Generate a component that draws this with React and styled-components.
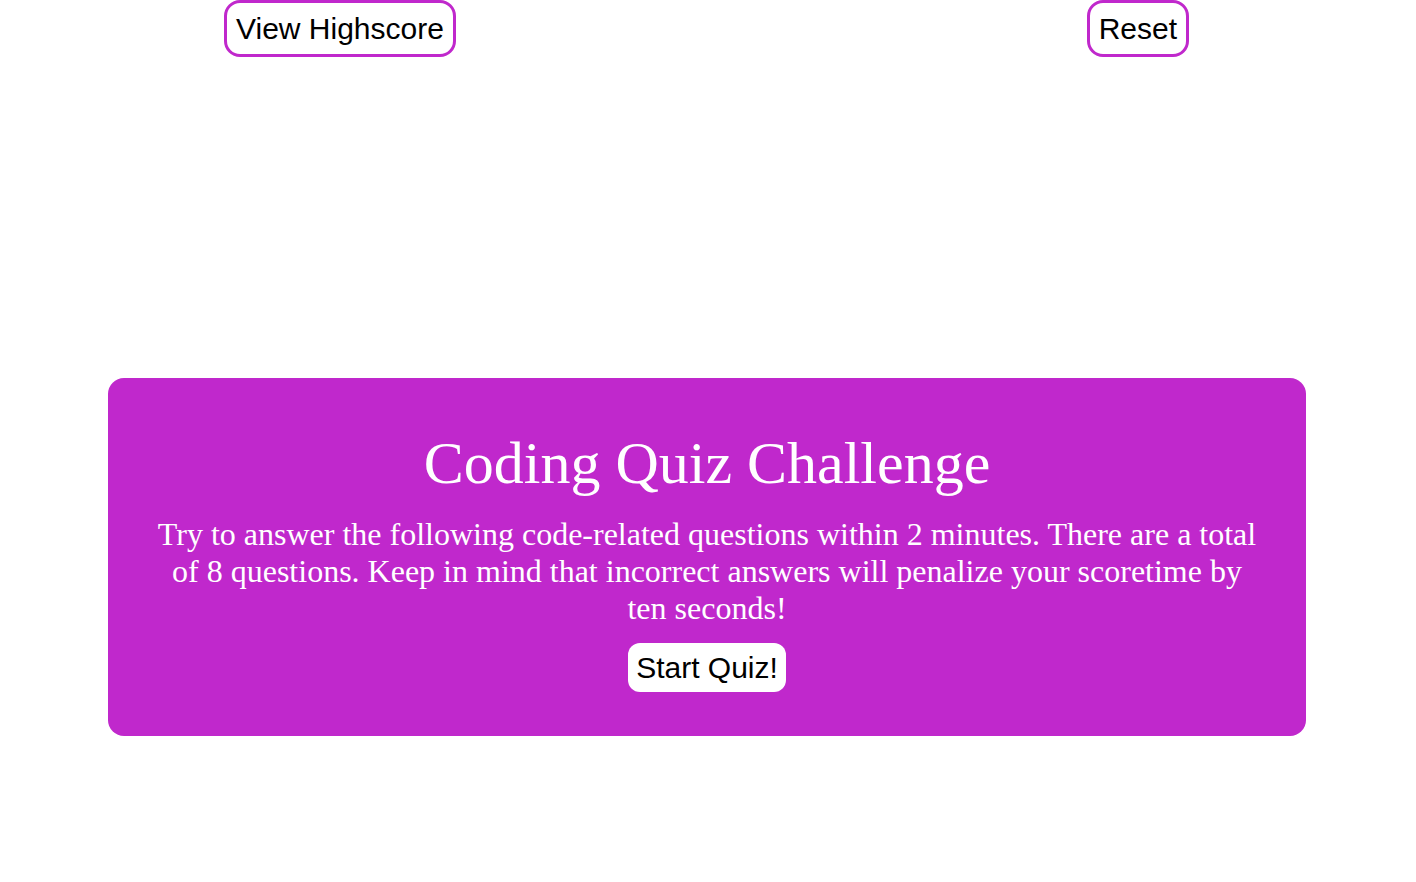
import React from "react";
import styled, { createGlobalStyle } from "styled-components";

const Global = createGlobalStyle`
  html, body { margin: 0; padding: 0; background: #ffffff; }
  body { font-family: "Liberation Serif", "Times New Roman", serif; }
`;

const Page = styled.div`
  display: flex;
  flex-direction: column;
  width: 1416px;
`;

const Header = styled.header`
  display: flex;
  justify-content: space-between;
  align-items: flex-start;
  padding: 0 227px 0 224px;
`;

const NavButton = styled.button`
  box-sizing: border-box;
  height: 57px;
  padding: 0 9px;
  border: 3px solid #c028cc;
  border-radius: 16px;
  background: #ffffff;
  color: #000000;
  font-family: "Liberation Sans", Arial, sans-serif;
  font-size: 30px;
  line-height: 34px;
  cursor: pointer;
`;

const Card = styled.section`
  box-sizing: border-box;
  width: 1198px;
  margin: 321px 0 0 108px;
  padding: 50px 45px 44px;
  background: #c028cc;
  border-radius: 16px;
  display: flex;
  flex-direction: column;
  align-items: center;
  color: #ffffff;
  text-align: center;
`;

const Title = styled.h1`
  margin: 0;
  font-family: "Liberation Serif", "Times New Roman", serif;
  font-weight: normal;
  font-size: 60px;
  line-height: 70px;
`;

const Intro = styled.p`
  margin: 18px 0 16px;
  font-family: "Liberation Serif", "Times New Roman", serif;
  font-size: 32px;
  line-height: 37px;
`;

const StartButton = styled.button`
  box-sizing: border-box;
  height: 49px;
  padding: 0 8px;
  border: none;
  border-radius: 12px;
  background: #ffffff;
  color: #000000;
  font-family: "Liberation Sans", Arial, sans-serif;
  font-size: 30px;
  line-height: 34px;
  cursor: pointer;
`;

export default function App() {
  return (
    <>
      <Global />
      <Page>
        <Header>
          <NavButton>View Highscore</NavButton>
          <NavButton>Reset</NavButton>
        </Header>
        <Card>
          <Title>Coding Quiz Challenge</Title>
          <Intro>
            Try to answer the following code-related questions within 2 minutes. There are a total
            of 8 questions. Keep in mind that incorrect answers will penalize your scoretime by
            ten seconds!
          </Intro>
          <StartButton>Start Quiz!</StartButton>
        </Card>
      </Page>
    </>
  );
}
